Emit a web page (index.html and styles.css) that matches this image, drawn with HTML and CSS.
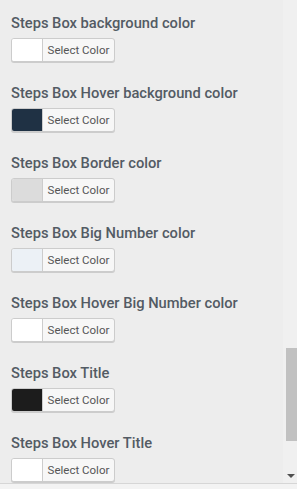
FILE: index.html
```html
<!DOCTYPE html>
<html lang="en">
<head>
  <meta charset="UTF-8">
  <meta name="viewport" content="width=device-width, initial-scale=1.0">
  <title>Steps Box colors</title>
  <link rel="stylesheet" href="styles.css">
</head>
<body>
  <div class="panel">
    <!-- Color settings -->
    <div class="settings">
      <div class="setting">
        <h3>Steps Box background color</h3>
        <button class="color-btn"><span class="swatch swatch-white"></span><span class="label">Select Color</span></button>
      </div>
      <div class="setting">
        <h3>Steps Box Hover background color</h3>
        <button class="color-btn"><span class="swatch swatch-navy"></span><span class="label">Select Color</span></button>
      </div>
      <div class="setting">
        <h3>Steps Box Border color</h3>
        <button class="color-btn"><span class="swatch swatch-grey"></span><span class="label">Select Color</span></button>
      </div>
      <div class="setting">
        <h3>Steps Box Big Number color</h3>
        <button class="color-btn"><span class="swatch swatch-ice"></span><span class="label">Select Color</span></button>
      </div>
      <div class="setting">
        <h3>Steps Box Hover Big Number color</h3>
        <button class="color-btn"><span class="swatch swatch-white"></span><span class="label">Select Color</span></button>
      </div>
      <div class="setting">
        <h3>Steps Box Title</h3>
        <button class="color-btn"><span class="swatch swatch-black"></span><span class="label">Select Color</span></button>
      </div>
      <div class="setting">
        <h3>Steps Box Hover Title</h3>
        <button class="color-btn"><span class="swatch swatch-white"></span><span class="label">Select Color</span></button>
      </div>
    </div>

    <!-- Scrollbar -->
    <div class="scrollbar">
      <div class="thumb"></div>
      <div class="arrow-down"></div>
    </div>
  </div>
  <div class="footer"></div>
</body>
</html>
```

FILE: styles.css
```css
body {
  margin: 0;
  background: #ededed;
  font-family: Roboto, "Liberation Sans", sans-serif;
  overflow: hidden;
}

.panel {
  display: flex;
  height: 483px;
  overflow: hidden;
}

.settings {
  flex: 1;
  padding-left: 11px;
}

.setting {
  height: 70px;
  padding-top: 14px;
  box-sizing: border-box;
}

.setting h3 {
  margin: 0 0 6px;
  font-size: 14.7px;
  line-height: 18px;
  font-weight: 500;
  color: #535b64;
  white-space: nowrap;
}

/* Select Color button */
.color-btn {
  display: flex;
  align-items: stretch;
  width: 104px;
  height: 24px;
  padding: 0;
  border: 1px solid #cccccc;
  border-radius: 3px;
  background: #f7f7f7;
  box-shadow: 0 1px 0 #cccccc;
  overflow: hidden;
  cursor: pointer;
  font-family: inherit;
}

.swatch {
  width: 30px;
  border-right: 1px solid #cccccc;
}

.swatch-white { background: #ffffff; }
.swatch-navy { background: #1f3144; }
.swatch-grey { background: #dcdcdc; }
.swatch-ice { background: #ecf1f6; }
.swatch-black { background: #1c1c1c; }

.label {
  flex: 1;
  font-size: 11.5px;
  line-height: 22px;
  color: #555555;
  text-align: center;
}

/* Scrollbar */
.scrollbar {
  width: 14px;
  background: #f0f0f0;
  display: flex;
  flex-direction: column;
  align-items: center;
}

.thumb {
  width: 11px;
  height: 93px;
  margin-top: 348px;
  margin-left: 2px;
  background: #c1c1c1;
}

.arrow-down {
  margin-top: 33px;
  margin-left: 1px;
  width: 0;
  height: 0;
  border-left: 4px solid transparent;
  border-right: 4px solid transparent;
  border-top: 4px solid #505050;
}

.footer {
  height: 6px;
  border-top: 1px solid #d6d6d6;
  background: #f3f3f3;
}
```
